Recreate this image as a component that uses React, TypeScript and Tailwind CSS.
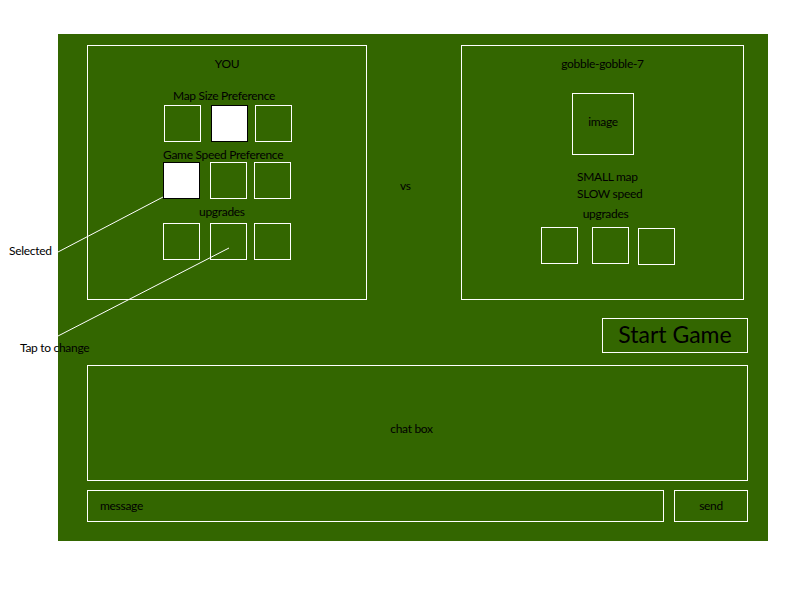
const font = { fontFamily: "Lato, 'Open Sans', sans-serif" };

function Square({ on = false }: { on?: boolean }) {
  return (
    <div
      className={
        on
          ? "w-[37px] h-[37px] bg-white border border-black"
          : "w-[37px] h-[37px] border border-white"
      }
    />
  );
}

function YouPanel() {
  return (
    <div className="w-[280px] h-[255px] border border-white flex flex-col">
      <div className="mt-[10px] h-4 leading-4 text-center">YOU</div>
      <div className="mt-[16px] h-4 leading-4 pl-[85px]">Map Size Preference</div>
      <div className="mt-px flex pl-[76px]">
        <Square />
        <div className="ml-[10px]">
          <Square on />
        </div>
        <div className="ml-[7px]">
          <Square />
        </div>
      </div>
      <div className="mt-[5px] h-4 leading-4 pl-[75px]">Game Speed Preference</div>
      <div className="-mt-px flex pl-[75px]">
        <Square on />
        <div className="ml-[10px]">
          <Square />
        </div>
        <div className="ml-[7px]">
          <Square />
        </div>
      </div>
      <div className="mt-[5px] h-4 leading-4 pl-[111px]">upgrades</div>
      <div className="mt-[3px] flex pl-[75px]">
        <Square />
        <div className="ml-[10px]">
          <Square />
        </div>
        <div className="ml-[7px]">
          <Square />
        </div>
      </div>
    </div>
  );
}

function OpponentPanel() {
  return (
    <div className="w-[283px] h-[255px] border border-white flex flex-col items-center">
      <div className="mt-[10px] h-4 leading-4">gobble-gobble-7</div>
      <div className="mt-[21px] w-[62px] h-[62px] border border-white flex items-center justify-center pb-[4px] ml-[1px]">
        image
      </div>
      <div className="mt-[13px] self-start pl-[115px] leading-[17px]">
        <div>SMALL map</div>
        <div>SLOW speed</div>
      </div>
      <div className="mt-[4px] h-4 leading-4 pl-[6px]">upgrades</div>
      <div className="mt-[5px] self-start flex items-start pl-[79px]">
        <Square />
        <div className="ml-[14px]">
          <Square />
        </div>
        <div className="ml-[9px] mt-px">
          <Square />
        </div>
      </div>
    </div>
  );
}

export default function App() {
  return (
    <div
      className="relative w-[800px] h-[600px] bg-white text-[12px] tracking-[-0.3px] text-black"
      style={font}
    >
      <div className="pt-[34px] pl-[58px]">
        <div className="w-[710px] h-[507px] bg-[#336600] pl-[29px] pr-[20px] pt-[11px] flex flex-col">
          <div className="flex">
            <YouPanel />
            <div className="w-[94px] pl-[33px] pt-[133px] leading-4">vs</div>
            <OpponentPanel />
          </div>

          <div className="mt-[18px] flex justify-end">
            <button className="w-[146px] h-[35px] border border-white text-[23px] tracking-normal leading-none pb-[2px]">
              Start Game
            </button>
          </div>

          <div className="mt-[12px] h-[116px] border border-white flex items-center justify-center pr-[12px] pt-[12px]">
            chat box
          </div>

          <div className="mt-[9px] flex gap-[10px] h-[32px]">
            <div className="flex-1 border border-white flex items-center pl-[12px] pb-px">message</div>
            <button className="w-[74px] border border-white pb-px">send</button>
          </div>
        </div>
      </div>

      {/* annotations */}
      <svg className="absolute left-0 top-0 pointer-events-none" width="800" height="600">
        <line x1="58" y1="252" x2="163" y2="197" stroke="white" strokeWidth="1" />
        <line x1="58" y1="336" x2="229" y2="248" stroke="white" strokeWidth="1" />
      </svg>
      <div className="absolute left-[9px] top-[243px] leading-4">Selected</div>
      <div className="absolute left-[20px] top-[340px] leading-4">Tap to change</div>
    </div>
  );
}
